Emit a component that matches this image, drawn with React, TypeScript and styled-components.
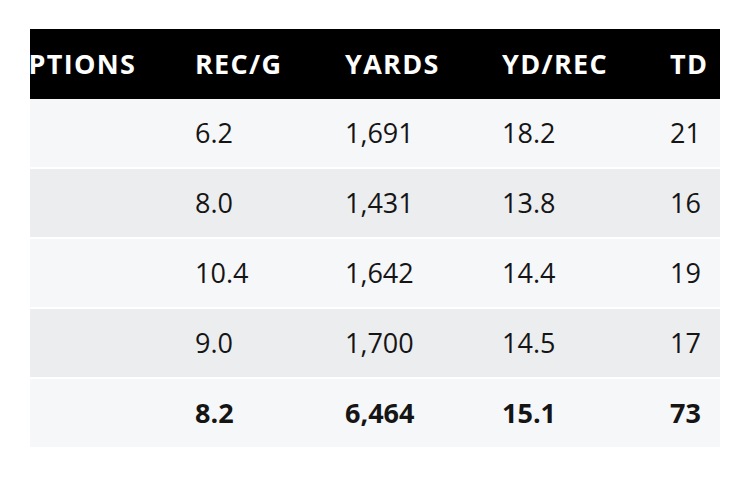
import React, { useLayoutEffect, useRef } from "react";
import styled, { createGlobalStyle } from "styled-components";

const GlobalStyle = createGlobalStyle`
  html, body {
    margin: 0;
    padding: 0;
    background: #ffffff;
  }
  body {
    font-family: "Open Sans", "Noto Sans", sans-serif;
    color: #111111;
  }
`;

type Row = {
  season: string;
  receptions: string;
  recPerGame: string;
  yards: string;
  ydPerRec: string;
  td: string;
};

const ROWS: Row[] = [
  { season: "2019", receptions: "99", recPerGame: "6.2", yards: "1,691", ydPerRec: "18.2", td: "21" },
  { season: "2020", receptions: "104", recPerGame: "8.0", yards: "1,431", ydPerRec: "13.8", td: "16" },
  { season: "2021", receptions: "114", recPerGame: "10.4", yards: "1,642", ydPerRec: "14.4", td: "19" },
  { season: "2022", receptions: "117", recPerGame: "9.0", yards: "1,700", ydPerRec: "14.5", td: "17" },
];

const TOTAL: Row = {
  season: "Total",
  receptions: "434",
  recPerGame: "8.2",
  yards: "6,464",
  ydPerRec: "15.1",
  td: "73",
};

const COLUMN_WIDTHS = [120, 237, 150, 157, 168, 66];

const App: React.FC = () => {
  const scrollRef = useRef<HTMLDivElement>(null);

  // the stats table is wider than its box: show its right end, as the page does
  useLayoutEffect(() => {
    const el = scrollRef.current;
    if (el) el.scrollLeft = el.scrollWidth;
  }, []);

  return (
    <>
      <GlobalStyle />
      <Page>
        <ScrollBox ref={scrollRef}>
          <Table>
            <colgroup>
              {COLUMN_WIDTHS.map((w, i) => (
                <col key={i} style={{ width: w }} />
              ))}
            </colgroup>
            <thead>
              <tr>
                <HeadCell>SEASON</HeadCell>
                <HeadCell>RECEPTIONS</HeadCell>
                <HeadCell>REC/G</HeadCell>
                <HeadCell>YARDS</HeadCell>
                <HeadCell>YD/REC</HeadCell>
                <HeadCell>TD</HeadCell>
              </tr>
            </thead>
            <tbody>
              {ROWS.map((r, i) => (
                <BodyRow key={r.season} $shade={i % 2 === 1}>
                  <Cell>{r.season}</Cell>
                  <Cell>{r.receptions}</Cell>
                  <Cell>{r.recPerGame}</Cell>
                  <Cell>{r.yards}</Cell>
                  <Cell>{r.ydPerRec}</Cell>
                  <Cell>{r.td}</Cell>
                </BodyRow>
              ))}
              <BodyRow $shade={false}>
                <Cell $bold>{TOTAL.season}</Cell>
                <Cell $bold>{TOTAL.receptions}</Cell>
                <Cell $bold>{TOTAL.recPerGame}</Cell>
                <Cell $bold>{TOTAL.yards}</Cell>
                <Cell $bold>{TOTAL.ydPerRec}</Cell>
                <Cell $bold>{TOTAL.td}</Cell>
              </BodyRow>
            </tbody>
          </Table>
        </ScrollBox>
      </Page>
    </>
  );
};

export default App;

const Page = styled.div`
  padding: 29px 30px 30px 30px;
`;

const ScrollBox = styled.div`
  width: 690px;
  overflow-x: auto;
  scrollbar-width: none;
  &::-webkit-scrollbar {
    display: none;
  }
`;

const Table = styled.table`
  width: 898px;
  table-layout: fixed;
  border-collapse: collapse;
`;

const HeadCell = styled.th`
  background: #000000;
  color: #ffffff;
  height: 68px;
  padding: 0 0 2px 16px;
  text-align: left;
  font-size: 27px;
  font-weight: 700;
  letter-spacing: 1.3px;
  white-space: nowrap;
  vertical-align: middle;
`;

const BodyRow = styled.tr<{ $shade: boolean }>`
  background: ${(p) => (p.$shade ? "#ecedef" : "#f6f7f9")};
  & + & {
    border-top: 2px solid #ffffff;
  }
`;

const Cell = styled.td<{ $bold?: boolean }>`
  height: 66px;
  padding: 0 0 2px 16px;
  text-align: left;
  font-size: 27px;
  font-weight: ${(p) => (p.$bold ? 700 : 400)};
  color: #151515;
  white-space: nowrap;
  vertical-align: middle;
`;
